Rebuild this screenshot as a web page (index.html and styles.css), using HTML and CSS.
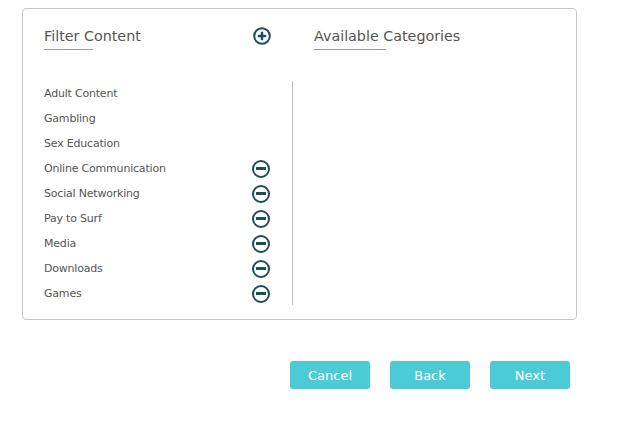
FILE: index.html
```html
<!DOCTYPE html>
<html lang="en">
<head>
    <meta charset="UTF-8">
    <title>Filter Content</title>
    <link rel="stylesheet" href="styles.css">
</head>
<body>
    <div class="panel">
        <div class="col left">
            <div class="head">
                <h2 class="title">Filter Content</h2>
                <button class="icon-btn">
                    <svg width="18" height="18" viewBox="0 0 18 18"><circle cx="9" cy="9" r="7.8" fill="none" stroke="#1d4f55" stroke-width="2"/><path d="M9 4.8v8.4M4.8 9h8.4" stroke="#1d4f55" stroke-width="2.4"/></svg>
                </button>
            </div>
            <ul class="list">
                <li><span>Adult Content</span></li>
                <li><span>Gambling</span></li>
                <li><span>Sex Education</span></li>
                <li><span>Online Communication</span><i class="minus"></i></li>
                <li><span>Social Networking</span><i class="minus"></i></li>
                <li><span>Pay to Surf</span><i class="minus"></i></li>
                <li><span>Media</span><i class="minus"></i></li>
                <li><span>Downloads</span><i class="minus"></i></li>
                <li><span>Games</span><i class="minus"></i></li>
            </ul>
        </div>
        <div class="col right">
            <div class="head">
                <h2 class="title wide">Available Categories</h2>
            </div>
        </div>
    </div>

    <div class="actions">
        <button class="btn">Cancel</button>
        <button class="btn">Back</button>
        <button class="btn">Next</button>
    </div>
</body>
</html>
```

FILE: styles.css
```css
body {
    font-family: Tahoma, "DejaVu Sans", Verdana, sans-serif;
    margin: 0;
    padding: 8px 0 0 22px;
    background: #fff;
    color: #555;
}

.panel {
    width: 555px;
    height: 312px;
    border: 1px solid #c8c8c8;
    border-radius: 4px;
    display: flex;
    box-sizing: border-box;
}

.col.left {
    width: 270px;
    padding-left: 21px;
    box-sizing: border-box;
}

.col.right {
    padding-left: 21px;
}

.head {
    height: 72px;
    display: flex;
    align-items: flex-start;
    padding-top: 18px;
    box-sizing: border-box;
}

.title {
    margin: 0;
    font-size: 14.3px;
    font-weight: normal;
    color: #555;
    position: relative;
    line-height: 18px;
    padding-bottom: 5px;
    flex: 1;
}

.title::after {
    content: "";
    position: absolute;
    left: 0;
    bottom: 0;
    width: 49px;
    border-bottom: 1px solid #999;
}

.title.wide::after {
    width: 72px;
}

.icon-btn {
    border: none;
    background: none;
    padding: 0;
    margin: 0 22px 0 0;
    width: 18px;
    height: 18px;
    cursor: pointer;
    display: block;
}

.list {
    list-style: none;
    margin: 0;
    padding: 0;
    border-right: 1px solid #bbb;
    height: 224px;
}

.list li {
    height: 25px;
    display: flex;
    align-items: center;
    justify-content: space-between;
    padding-right: 22px;
    font-size: 11px;
    letter-spacing: -0.2px;
}

.minus {
    width: 18px;
    height: 18px;
    box-sizing: border-box;
    border: 2px solid #1d4f55;
    border-radius: 50%;
    position: relative;
}

.minus::after {
    content: "";
    position: absolute;
    left: 2px;
    right: 2px;
    top: 5.5px;
    height: 3px;
    background: #1d4f55;
}

.actions {
    display: flex;
    gap: 20px;
    margin: 41px 0 0 268px;
}

.btn {
    width: 80px;
    height: 28px;
    border: none;
    border-radius: 3px;
    background: #4acbd6;
    color: #fff;
    font-family: Tahoma, "DejaVu Sans", sans-serif;
    font-size: 13px;
    cursor: pointer;
}
```
